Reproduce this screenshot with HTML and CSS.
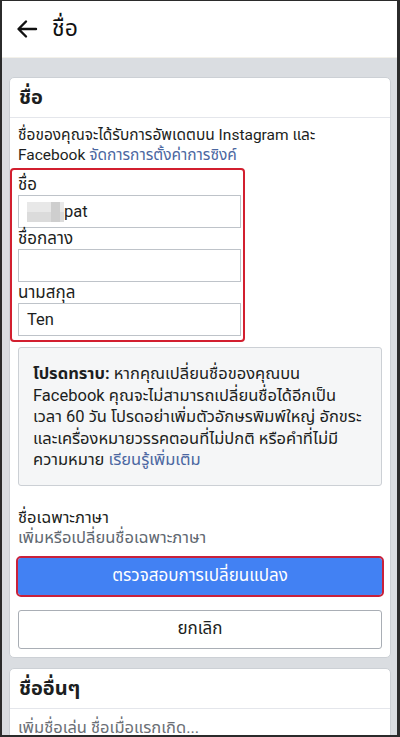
FILE: index.html
```html
<!DOCTYPE html>
<html lang="th">
<head>
    <meta charset="UTF-8">
    <title>ชื่อ</title>
    <meta name="viewport" content="width=device-width, initial-scale=1.0">
    <link rel="stylesheet" href="styles.css">
</head>
<body>
    <div class="frame">
        <div class="topbar">
            <svg class="back" width="24" height="24" viewBox="0 0 24 24">
                <path d="M21 12H4M11 4.5L3.5 12L11 19.5" fill="none" stroke="#111" stroke-width="2.4" stroke-linecap="round" stroke-linejoin="round"/>
            </svg>
            <span class="topbar-title">ชื่อ</span>
        </div>

        <div class="content">
            <div class="card">
                <div class="card-title">ชื่อ</div>
                <div class="card-body">
                    <p class="intro">ชื่อของคุณจะได้รับการอัพเดตบน Instagram และ<br>Facebook <a href="#">จัดการการตั้งค่าการซิงค์</a></p>

                    <div class="highlight">
                        <div class="label">ชื่อ</div>
                        <div class="field"><span class="blur"></span>pat</div>
                        <div class="label">ชื่อกลาง</div>
                        <div class="field"></div>
                        <div class="label">นามสกุล</div>
                        <div class="field">Ten</div>
                    </div>

                    <div class="note">
                        <b>โปรดทราบ:</b> หากคุณเปลี่ยนชื่อของคุณบน<br>
                        Facebook คุณจะไม่สามารถเปลี่ยนชื่อได้อีกเป็น<br>
                        เวลา 60 วัน โปรดอย่าเพิ่มตัวอักษรพิมพ์ใหญ่ อักขระ<br>
                        และเครื่องหมายวรรคตอนที่ไม่ปกติ หรือคำที่ไม่มี<br>
                        ความหมาย <a href="#">เรียนรู้เพิ่มเติม</a>
                    </div>

                    <div class="lang">
                        <div class="lang-title">ชื่อเฉพาะภาษา</div>
                        <a class="lang-link" href="#">เพิ่มหรือเปลี่ยนชื่อเฉพาะภาษา</a>
                    </div>

                    <button class="btn btn-primary">ตรวจสอบการเปลี่ยนแปลง</button>
                    <button class="btn btn-cancel">ยกเลิก</button>
                </div>
            </div>

            <div class="card">
                <div class="card-title">ชื่ออื่นๆ</div>
                <div class="card-body second">
                    <div class="muted">เพิ่มชื่อเล่น ชื่อเมื่อแรกเกิด...</div>
                </div>
            </div>
        </div>
    </div>
</body>
</html>
```

FILE: styles.css
```css
* {
    box-sizing: border-box;
}
body {
    margin: 0;
    font-family: Roboto, "Noto Sans Thai", "Noto Sans", sans-serif;
    color: #1c1e21;
    background: #fff;
}
.frame {
    width: 400px;
    height: 737px;
    overflow: hidden;
    border-style: solid;
    border-color: #2b2b2b;
    border-width: 1px 3px 2px 2px;
    display: flex;
    flex-direction: column;
}
.topbar {
    height: 57px;
    flex-shrink: 0;
    display: flex;
    align-items: center;
    padding-left: 13px;
    background: #fff;
    border-bottom: 1px solid #f3f1ea;
}
.topbar-title {
    font-size: 23px;
    margin-left: 13px;
    color: #111;
}
.content {
    flex: 1;
    background: #dadde1;
    padding: 19px 6px 0 7px;
}
.card {
    background: #fff;
    border-radius: 5px;
    border: 1px solid #ccd0d5;
    margin-bottom: 10px;
}
.card-title {
    height: 40px;
    line-height: 38px;
    padding: 0 9px;
    font-size: 20px;
    font-weight: bold;
    border-bottom: 1px solid #e4e6eb;
}
.card-body {
    padding: 7px 8px 8px;
}
.card-body.second {
    padding-top: 9px;
}
p {
    margin: 0;
}
a {
    color: #4b67a1;
    text-decoration: none;
}
.intro {
    font-size: 15.5px;
    line-height: 20px;
}
.highlight {
    margin: 3px 0 0 -8px;
    width: 235px;
    border: 2px solid #d21f2f;
    border-radius: 4px;
    padding: 4px 2px 4px 6px;
}
.label {
    font-size: 17px;
    line-height: 21px;
}
.field {
    height: 33px;
    border: 1px solid #bec3c9;
    font-size: 16.5px;
    padding-left: 8px;
    display: flex;
    align-items: center;
}
.blur {
    display: inline-block;
    width: 37px;
    height: 20px;
    background:
        linear-gradient(to right, transparent 0 24px, #c9c9c9 24px 33px, transparent 33px),
        linear-gradient(to bottom, #e6e6e6 0 10px, #d8d8d8 10px);
    opacity: 0.9;
}
.note {
    margin-top: 5px;
    background: #f5f6f7;
    border: 1px solid #ccd0d5;
    border-radius: 3px;
    padding: 15px 8px 14px 14px;
    font-size: 16.5px;
    line-height: 21.5px;
    color: #1c1e21;
}
.lang {
    margin-top: 22px;
    font-size: 16.5px;
    line-height: 20px;
}
.lang-link {
    color: #606770;
}
.btn {
    display: block;
    width: 100%;
    height: 37px;
    border-radius: 3px;
    font-family: inherit;
    font-size: 17px;
    cursor: pointer;
}
.btn-primary {
    margin-top: 10px;
    background: #4281f3;
    color: #fff;
    border: none;
    outline: 2px solid #c8213b;
}
.btn-cancel {
    margin-top: 15px;
    height: 39px;
    background: #fff;
    color: #1c1e21;
    border: 1px solid #a9aeb5;
}
.muted {
    font-size: 16.5px;
    line-height: 20px;
    color: #6b6f76;
}
```
